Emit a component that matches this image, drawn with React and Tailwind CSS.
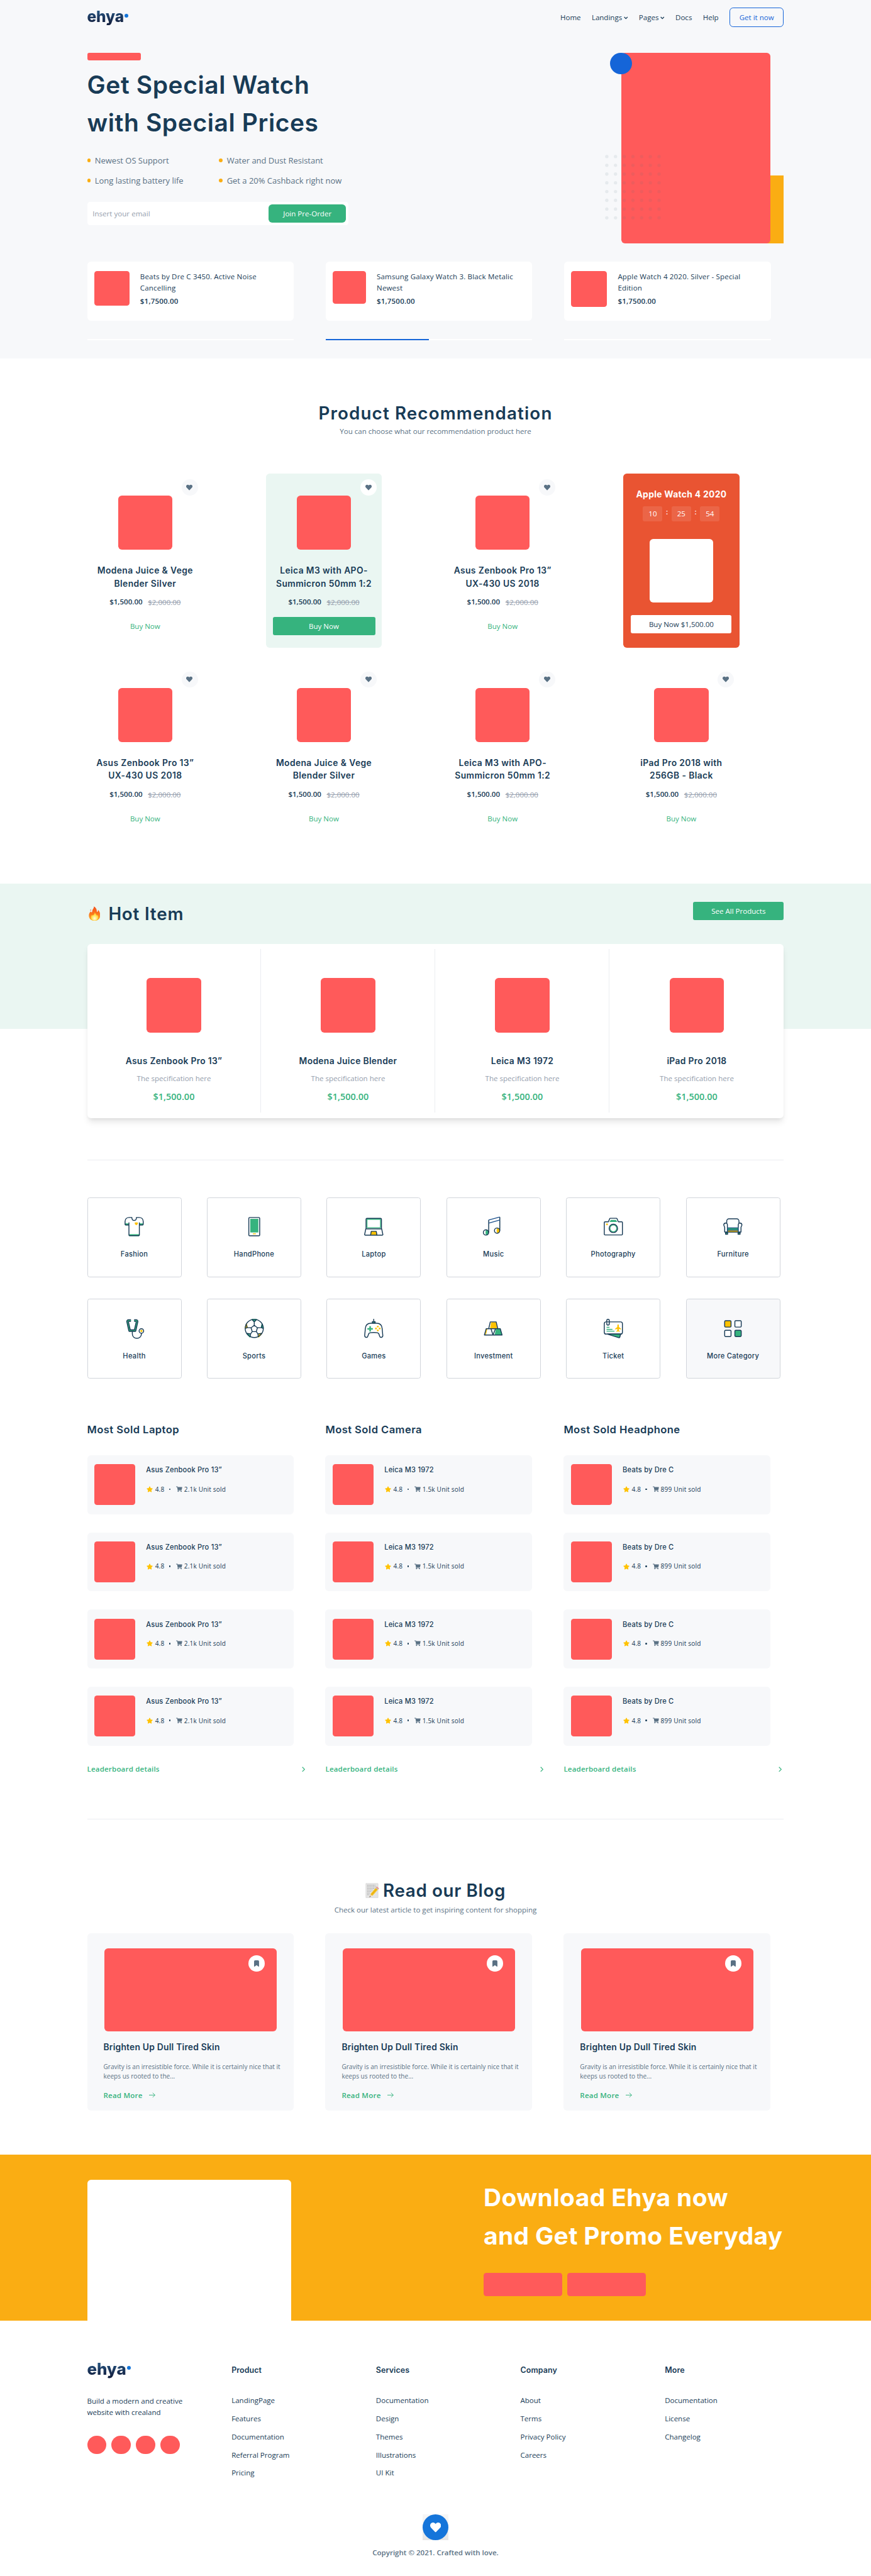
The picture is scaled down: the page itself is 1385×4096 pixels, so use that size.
import React from "react";
import { FaHeart, FaShoppingCart, FaStar } from "react-icons/fa";

const NAVY = "#183b56";
const GREEN = "#36b37e";
const YELLOW = "#ffc200";

function Logo({ large }) {
  return (
    <div className={large ? "flex h-9 items-start" : "flex h-[34px] items-start"}>
      <span
        className={
          "bg-gradient-to-b from-[#24507c] from-20% to-[#13203f] to-90% bg-clip-text font-['Inter'] font-extrabold text-transparent " +
          (large ? "text-[36px] leading-[40px] tracking-[-0.2px]" : "text-[34px] leading-[37px] tracking-[-0.2px]")
        }
      >
        ehya
      </span>
      <span className={large ? "mt-3 ml-0.5 size-[9px] rounded-full bg-[#1475da]" : "mt-[13px] ml-px size-2 rounded-full bg-[#1475da]"} />
    </div>
  );
}

function Caret() {
  return (
    <svg className="ml-1 inline-block align-middle" width="9" height="7" viewBox="0 0 10 7" fill="none" stroke={NAVY} strokeWidth="2">
      <path d="M1 1.2l4 4 4-4" />
    </svg>
  );
}

function Nav() {
  return (
    <nav className="flex h-[76px] items-center justify-between">
      <div className="-mt-1.5">
        <Logo />
      </div>
      <div className="flex items-center gap-6">
        <a>Home</a>
        <a>Landings<Caret /></a>
        <a>Pages<Caret /></a>
        <a>Docs</a>
        <a>Help</a>
        <button className="h-11 w-[120px] rounded-lg border-2 border-[#1565d8] text-[#1565d8]">Get it now</button>
      </div>
    </nav>
  );
}

function Bullet({ children }) {
  return (
    <li className="flex h-7 items-center gap-[9px]">
      <span className="size-2 rounded-full bg-[#faad13]" />
      {children}
    </li>
  );
}

const DOTS = Array.from({ length: 56 }, (_, i) => [(i % 7) * 19.2 + 4, Math.floor(i / 7) * 19.3 + 4]);

function HeroArt() {
  return (
    <div className="relative h-[421px] w-[383px]">
      <div className="absolute right-0 bottom-0 h-[150px] w-[110px] bg-[#faad13]" />
      <div className="absolute top-0 left-6 h-[421px] w-[329px] rounded-lg bg-[#ff5a5a]" />
      <div className="absolute top-0 left-0 size-12 rounded-full bg-[#1565d8]" />
      <svg className="absolute top-[225px] -left-[11px]" width="124" height="144">
        {DOTS.map(([x, y], i) => (
          <circle key={i} cx={x} cy={y} r="3.7" fill="#5a7184" fillOpacity="0.1" />
        ))}
      </svg>
    </div>
  );
}

const HERO_ITEMS = [
  ["Beats by Dre C 3450. Active Noise", "Cancelling", "h-[77px] w-[77px]", false],
  ["Samsung Galaxy Watch 3. Black Metalic", "Newest", "h-[73px] w-[73px]", true],
  ["Apple Watch 4 2020. Silver - Special", "Edition", "h-[79px] w-[79px]", false],
];

function Hero() {
  return (
    <header className="h-[790px] bg-[#f7f8fa]">
      <div className="mx-auto w-[1536px]">
        <Nav />
        <div className="mt-10 flex justify-between">
          <div>
            <div className="h-[17px] w-[118px] rounded-sm bg-[#ff5a5a]" />
            <h1 className="mt-3 font-['Inter'] text-[54px] leading-[84px] font-semibold tracking-[0.85px] whitespace-nowrap">
              Get Special Watch
              <br />
              with Special Prices
            </h1>
            <ul className="mt-[27px] grid grid-cols-[291px_auto] gap-y-4 text-lg text-[#5a7184]">
              <Bullet>Newest OS Support</Bullet>
              <Bullet>Water and Dust Resistant</Bullet>
              <Bullet>Long lasting battery life</Bullet>
              <Bullet>Get a 20% Cashback right now</Bullet>
            </ul>
            <div className="mt-[33px] flex h-[52px] w-[576px] items-center justify-between rounded-md bg-white pr-[5px] pl-3">
              <span className="tracking-[0.05px] text-[#959ead]">Insert your email</span>
              <button className="h-10 w-[171px] rounded-lg bg-[#36b37e] text-white">Join Pre-Order</button>
            </div>
          </div>
          <HeroArt />
        </div>
        <div className="mt-10 flex gap-[69.5px]">
          {HERO_ITEMS.map(([a, b, img, active]) => (
            <div key={a} className="w-[456px] shrink-0">
              <div className="flex h-[130px] rounded-lg bg-white pt-5 pl-4">
                <div className={"shrink-0 rounded-md bg-[#ff5a5a] " + img} />
                <div className="ml-6 pt-px font-medium tracking-[0.23px] whitespace-nowrap">
                  <p className="leading-6">{a}</p>
                  <p className="leading-6">{b}</p>
                  <p className="mt-1.5 leading-6 font-semibold">$1,7500.00</p>
                </div>
              </div>
              <div className="mt-10 flex">
                <div className={"h-[3px] w-[228px] " + (active ? "bg-[#1565d8]" : "bg-white")} />
                <div className="h-[3px] w-[228px] bg-white" />
              </div>
            </div>
          ))}
        </div>
      </div>
    </header>
  );
}

const PRODUCTS = [
  ["Modena Juice & Vege", "Blender Silver"],
  ["Leica M3 with APO-", "Summicron 50mm 1:2", true],
  ["Asus Zenbook Pro 13”", "UX-430 US 2018"],
  null,
  ["Asus Zenbook Pro 13”", "UX-430 US 2018"],
  ["Modena Juice & Vege", "Blender Silver"],
  ["Leica M3 with APO-", "Summicron 50mm 1:2"],
  ["iPad Pro 2018 with", "256GB - Black"],
];

function ProductCard({ a, b, active }) {
  return (
    <div className={"relative flex h-[384px] w-64 flex-col items-center rounded-lg pt-12 " + (active ? "bg-[#eaf6f2]" : "")}>
      <div className={"absolute top-3 right-3 flex size-9 items-center justify-center rounded-full " + (active ? "bg-white" : "bg-[#f7f8fa]")}>
        <FaHeart size={14} color="#5a7184" />
      </div>
      <div className="size-[120px] rounded-lg bg-[#ff5a5a]" />
      <h3 className="mt-8 text-center font-['Inter'] text-[19.2px] leading-7 font-semibold tracking-[0.55px]">
        {a}
        <br />
        {b}
      </h3>
      <div className="mt-3.5 flex h-6 gap-3 leading-6">
        <span className="font-semibold">$1,500.00</span>
        <span className="pt-0.5 text-[#959ead] line-through">$2,000.00</span>
      </div>
      <button className={"mt-[22px] h-10 w-[226px] rounded " + (active ? "bg-[#36b37e] text-white" : "text-[#36b37e]")}>Buy Now</button>
    </div>
  );
}

function TimerBox({ children }) {
  return <span className="flex h-[33px] w-[43px] items-center justify-center rounded bg-white/10">{children}</span>;
}

function DealCard() {
  return (
    <div className="flex h-[384px] w-64 flex-col items-center rounded-lg bg-[#e95432] pt-8 text-white">
      <h3 className="font-['Inter'] text-[19.2px] leading-7 font-bold tracking-[0.43px]">Apple Watch 4 2020</h3>
      <div className="mt-3 flex">
        <TimerBox>10</TimerBox>
        <span className="w-5 text-center font-semibold">:</span>
        <TimerBox>25</TimerBox>
        <span className="w-5 text-center font-semibold">:</span>
        <TimerBox>54</TimerBox>
      </div>
      <div className="mt-[39px] size-[140px] rounded-lg bg-white" />
      <button className="mt-7 h-10 w-[222px] rounded bg-white text-[#183b56]">Buy Now $1,500.00</button>
    </div>
  );
}

function Recommendation() {
  return (
    <section className="mx-auto w-[1536px] pt-[93px]">
      <h2 className="text-center font-['Inter'] text-[38.5px] leading-[56px] font-semibold tracking-[1.55px]">Product Recommendation</h2>
      <p className="text-center text-[#5a7184]">You can choose what our recommendation product here</p>
      <div className="mt-[81px] grid grid-cols-[repeat(4,256px)] gap-x-[138px] gap-y-10">
        {PRODUCTS.map((p, i) => (p ? <ProductCard key={i} a={p[0]} b={p[1]} active={p[2]} /> : <DealCard key={i} />))}
      </div>
    </section>
  );
}

function Fire() {
  return (
    <svg width="26" height="33" viewBox="0 0 26 33">
      <defs>
        <linearGradient id="fire" x1="0" y1="0" x2="0" y2="1">
          <stop offset="0" stopColor="#f4511e" />
          <stop offset="0.55" stopColor="#fb7a1c" />
          <stop offset="1" stopColor="#fdb62b" />
        </linearGradient>
        <radialGradient id="core" cx="0.5" cy="0.75" r="0.7">
          <stop offset="0" stopColor="#fffde0" />
          <stop offset="0.6" stopColor="#ffe14a" />
          <stop offset="1" stopColor="#fdb52a" />
        </radialGradient>
      </defs>
      <path fill="url(#fire)" d="M11.5 0.5c4 2 6.500 6 6.300 9.800 0 2 1 2.700 2 1.500.8-1 .9-2.600.6-4 3.400 3.200 5.400 8 5.100 13C25.100 27.600 20 32 13 32 5.600 32 .6 27.600.5 20.800.4 16.800 2.200 13.500 4.400 11c.3 1.500 1 2.400 2 2.300 1.500-.1 1.400-1.900 1.700-4C8.600 6 12 4.500 11.500.5z" />
      <path fill="#f4511e" d="M4.500 6.500c.9 1.200.8 2.600-.1 3.900-1-.9-1.200-2.500.1-3.900z" />
      <path fill="url(#core)" d="M13.200 13c1 3.200 4 4.500 4.800 8 .4-.6.8-1.400.9-2.300 1.600 1.900 2.400 4.100 2 6.300-.7 4.200-3.800 6.500-7.900 6.500s-7.300-2.300-7.800-6.200c-.3-2.400.6-4.700 2.400-6.500.2 1.100.7 1.700 1.400 1.500C10.800 19.700 13.500 17 13.200 13z" />
    </svg>
  );
}

function Memo() {
  return (
    <svg width="31" height="34" viewBox="0 0 31 34">
      <rect x="1" y="1" width="27" height="32" rx="1" fill="#e4e4e4" stroke="#cfcfcf" strokeWidth="0.700" />
      <path d="M4 5h18M4 8.500h20M4 12h17M4 15.500h12M4 19h9M4 22.500h6M4 26h5" stroke="#9a9a9a" strokeWidth="1.100" strokeDasharray="3 0.900 1.800 0.700" />
      <path d="M9 31.500l2-7 4.700 3.700z" fill="#f2d3a0" />
      <path d="M9 31.500l.8-2.600 1.800 1.400z" fill="#444" />
      <path d="M11 24.500L22.500 11l5 4-11.800 13.200z" fill="#f6c21c" />
      <path d="M13.200 26.300L25 13" stroke="#d99a0b" strokeWidth="1.200" />
      <path d="M22.500 11l1.500-1.600 5 4-1.500 1.600z" fill="#b8c0c4" />
      <path d="M24 9.400c1.500-1.300 6.500 2.300 5 4z" fill="#f08a86" stroke="#f08a86" />
    </svg>
  );
}

const HOT = ["Asus Zenbook Pro 13”", "Modena Juice Blender", "Leica M3 1972", "iPad Pro 2018"];

function HotItems() {
  return (
    <section className="mt-[96.5px] h-80 bg-[#eaf6f2]">
      <div className="mx-auto w-[1536px]">
        <div className="flex h-[132px] items-start justify-between pt-10">
          <div className="flex items-center gap-[18px] pt-px pl-[3px]">
            <Fire />
            <h2 className="font-['Inter'] text-[38.5px] leading-[50px] font-semibold tracking-[1.1px]">Hot Item</h2>
          </div>
          <button className="h-10 w-[200px] rounded bg-[#36b37e] text-white">See All Products</button>
        </div>
        <div className="grid h-[384px] grid-cols-4 rounded-lg bg-white py-3 shadow-[0_10px_15px_-3px_rgba(0,0,0,0.1),0_4px_6px_-2px_rgba(0,0,0,0.05)]">
          {HOT.map((name, i) => (
            <div key={name} className={"flex flex-col items-center pt-16 " + (i < 3 ? "border-r-2 border-[#ebedf1]" : "")}>
              <div className="size-[120px] rounded-lg bg-[#ff5a5a]" />
              <h3 className="mt-[49px] font-['Inter'] text-[19.2px] leading-7 font-semibold tracking-[0.45px]">{name}</h3>
              <p className="mt-[11px] leading-6 text-[#959ead]">The specification here</p>
              <p className="mt-4 text-xl leading-7 font-semibold tracking-[0.05px] text-[#36b37e]">$1,500.00</p>
            </div>
          ))}
        </div>
      </div>
    </section>
  );
}

const ICONS = {
  Fashion: (
    <>
      <path d="M4 17h8v4H4zM36 17h8v4h-8zM13 41h22v4H13z" fill={GREEN} stroke="none" />
      <path d="M25.500 15h6.500v3.500l-3.200 2.500-3.300-2.500z" fill={YELLOW} stroke="none" />
      <path d="M12.500 15v27.500a1.500 1.500 0 0 0 1.500 1.500h20a1.500 1.500 0 0 0 1.500-1.500V15M12.500 20.500H5.500A1.500 1.500 0 0 1 4 19v-6c0-5.500 4-9 9-9h6c0 4 2 6.500 5 6.500S29 8 29 4h6c5 0 9 3.500 9 9v6a1.500 1.500 0 0 1-1.500 1.500h-7" />
    </>
  ),
  HandPhone: (
    <>
      <rect x="15.200" y="7" width="17.800" height="30" fill={GREEN} stroke="none" />
      <path d="M21 40h6.500" stroke={YELLOW} />
      <rect x="12" y="4" width="24" height="40.500" rx="2" />
    </>
  ),
  Laptop: (
    <>
      <rect x="9" y="8" width="30" height="18.500" stroke={GREEN} />
      <path d="M18 34.500h12l1.500 8h-15z" fill={YELLOW} stroke="none" />
      <path d="M17 43l1.500-8.500h11L31 43" />
      <path d="M7 29V8a2 2 0 0 1 2-2h30a2 2 0 0 1 2 2v21M6.500 29h35L44 41a1.500 1.500 0 0 1-1.500 2h-37A1.500 1.500 0 0 1 4 41z" />
    </>
  ),
  Music: (
    <>
      <path d="M8.500 31.500a5.500 5.500 0 0 1 0 11c-2-2-2-9 0-11z" fill={GREEN} stroke="none" />
      <path d="M33 27.500a5.500 5.500 0 0 1 0 11c-2-2-2-9 0-11z" fill={YELLOW} stroke="none" />
      <circle cx="8" cy="37" r="5.800" />
      <circle cx="32.500" cy="33" r="5.800" />
      <path d="M14 37V9.500M38.500 33V3" />
      <path d="M14 9.500L38.500 3M14 16.500L38.500 9.500" stroke="#1a4f8b" />
    </>
  ),
  Photography: (
    <>
      <path d="M18.500 9.500h11l3 4.500h-17z" fill={GREEN} stroke="none" />
      <circle cx="24" cy="28" r="7.500" stroke={GREEN} />
      <circle cx="24" cy="28" r="9.300" />
      <circle cx="10" cy="19" r="2.100" fill={YELLOW} stroke="none" />
      <path d="M5.500 13.500H13L16 6.500a1.500 1.500 0 0 1 1.200-.8h13.600a1.500 1.500 0 0 1 1.200.8l3 7h7.500A1.500 1.500 0 0 1 44 15v26a1.500 1.500 0 0 1-1.500 1.500h-37A1.500 1.500 0 0 1 4 41V15a1.500 1.500 0 0 1 1.500-1.500z" />
    </>
  ),
  Furniture: (
    <>
      <rect x="12" y="27.500" width="24" height="4.500" fill={GREEN} stroke="none" />
      <rect x="12" y="32.500" width="24" height="4" fill={YELLOW} stroke="none" />
      <path d="M8 37h4.500v4H8zM35.500 37H40v4h-4.500z" fill={GREEN} />
      <path d="M10.500 17v-5a5 5 0 0 1 5-5h17a5 5 0 0 1 5 5v5M12 27V20c0-5.500-8-4.500-8 .5 0 2 2 3.500 2 5.500v10h36V26c0-2 2-3.500 2-5.500 0-5-8-6-8-.5v7" />
      <path d="M12 27h24M12 32h24M12 27v9.500M36 27v9.500" stroke="#1a4f7b" />
    </>
  ),
  Health: (
    <>
      <path d="M17 6.500h-5.500a2 2 0 0 0-2 2.300l4.500 20h12l4.500-20a2 2 0 0 0-2-2.300H24" stroke={NAVY} strokeWidth="5.500" />
      <path d="M17 6.500h-5.500a2 2 0 0 0-2 2.300l4.500 20h12l4.500-20a2 2 0 0 0-2-2.300H24" stroke={GREEN} strokeWidth="1.600" />
      <path d="M20 31v5c0 13 20 13 20 0v-1.500" />
      <circle cx="40" cy="29.500" r="5" fill="#fff" />
      <circle cx="40" cy="29.500" r="2.500" fill={YELLOW} stroke="none" />
    </>
  ),
  Sports: (
    <>
      <path d="M19 4h10l-5 5.500zM41 14l3 9-4.500-1zM7.500 35l5 1 2 7z" fill={GREEN} stroke={GREEN} />
      <path d="M7 14l-3 9 4.500-1zM40.500 35l-5 1-2 7z" fill={YELLOW} stroke={YELLOW} />
      <circle cx="24" cy="24" r="20" />
      <path d="M24 9.500v7.500M24 17l7 5.500-2.500 8.500h-9L17 22.500zM19 4.500l5 5 5-5M31 22.500l8.500-.5L42 14M17 22.500L8.500 22 6 14M39.500 22l4 2M8.500 22l-4 2M19.500 31L16 36l-8-1M28.500 31l3.500 5 8-1M16 36l-1 7M32 36l1 7" />
    </>
  ),
  Games: (
    <>
      <path d="M24 3v5" />
      <path d="M21 12V9h6v3z" fill={GREEN} />
      <path d="M10 25h12M16 19v12" stroke={GREEN} strokeWidth="3.500" />
      <g fill={YELLOW} stroke="none">
        <circle cx="33" cy="20" r="2" />
        <circle cx="33" cy="28.500" r="2" />
        <circle cx="28.900" cy="24.200" r="2" />
        <circle cx="37.200" cy="24.200" r="2" />
      </g>
      <path d="M18 12.500h12c7.500 0 12 4 12.500 11.500L44 40c0 4.500-6 5-7 1l-2-5.500c-1-2-5-2.500-11-2.500s-10 .5-11 2.500L11 41c-1 4-7 3.500-7-1l1.500-16C6 16.500 10.500 12.500 18 12.500z" />
    </>
  ),
  Investment: (
    <>
      <path d="M19.500 10H30l3 14H17zM6 38l2.500-13.500H11L8 38z" fill={YELLOW} stroke="none" />
      <path d="M30 25h10l3 13H27z" fill={GREEN} stroke="none" />
      <path d="M17.500 9.500h13l3.500 15H14zM8.500 24.500h10.500l4.500 14H4.500zM29 24.500h10.500l4 14H23.500z" />
    </>
  ),
  Ticket: (
    <>
      <path d="M11 36.500l25.500 8c1 0 1.500-.5 1.700-1.200l2-7z" fill={GREEN} />
      <rect x="4" y="9.500" width="40" height="27" rx="4" />
      <path d="M9.500 12V6.500a2.700 2.700 0 0 1 5.500 0V14a2.700 2.700 0 0 1-5.500 0v-1.500" />
      <path d="M9 21.500h6.500M9 26h13M9 30h17.500" stroke={GREEN} />
      <path d="M34.500 15c1.200 0 1.700 1.500 1.700 3v2.800l4.800 3.700v1.700l-4.800-1.400v3.400l2 1.800V31.500l-3.700-.9-3.700.9V30l2-1.800v-3.400L28 26.200v-1.700l4.800-3.700V18c0-1.500.5-3 1.700-3z" fill={YELLOW} stroke="none" />
    </>
  ),
  "More Category": (
    <>
      <rect x="6" y="7" width="14" height="14" rx="2" fill={YELLOW} />
      <rect x="28.500" y="7" width="14" height="14" rx="2" fill="#fff" />
      <rect x="6" y="28" width="14" height="14" rx="2" fill="#fff" />
      <rect x="28.500" y="28" width="14" height="14" rx="2" fill={GREEN} />
    </>
  ),
};

const CATEGORIES = ["Fashion", "HandPhone", "Laptop", "Music", "Photography", "Furniture", "Health", "Sports", "Games", "Investment", "Ticket", "More Category"];

function Categories() {
  return (
    <section className="mx-auto mt-[288.5px] w-[1536px] border-t-2 border-[#ebedf1] pt-[80.6px]">
      <div className="grid grid-cols-[repeat(6,208px)] gap-x-14 gap-y-12">
        {CATEGORIES.map((name) => (
          <div
            key={name}
            className={"flex h-44 flex-col items-center rounded-[5px] border border-[#d1d5db] pt-10 " + (name === "More Category" ? "bg-[#f7f8fa]" : "bg-white")}
          >
            <svg width="48" height="48" viewBox="0 0 48 48" fill="none" stroke={NAVY} strokeWidth="2" strokeLinejoin="round">
              {ICONS[name]}
            </svg>
            <span className="mt-[25px] font-['Inter'] text-[15.4px] leading-6 font-medium tracking-[0.4px]">{name}</span>
          </div>
        ))}
      </div>
    </section>
  );
}

const SOLD = [
  ["Most Sold Laptop", "Asus Zenbook Pro 13”", "2.1k Unit sold"],
  ["Most Sold Camera", "Leica M3 1972", "1.5k Unit sold"],
  ["Most Sold Headphone", "Beats by Dre C", "899 Unit sold"],
];

function MostSold() {
  return (
    <section className="mx-auto mt-[95px] grid w-[1536px] grid-cols-3 gap-x-10">
      {SOLD.map(([title, name, units]) => (
        <div key={title}>
          <h2 className="font-['Inter'] text-[23px] leading-9 font-semibold tracking-[0.6px]">{title}</h2>
          <div className="mt-[38px] flex flex-col gap-10">
            {[0, 1, 2, 3].map((i) => (
              <div key={i} className="flex h-[130px] w-[456px] rounded-lg bg-[#f7f8fa] pt-5 pl-4">
                <div className="size-[90px] rounded-md bg-[#ff5a5a]" />
                <div className="ml-6">
                  <h3 className="font-['Inter'] text-[15.4px] leading-[26px] font-medium tracking-[0.28px]">{name}</h3>
                  <div className="mt-[19px] flex h-5 items-center text-sm leading-5 tracking-[0.25px]">
                    <FaStar size={14} color={YELLOW} className="ml-px" />
                    <span className="ml-[5px]">4.8</span>
                    <span className="ml-[10px] size-1 rounded-full bg-[#183b56]" />
                    <FaShoppingCart size={13.5} color="#5a7184" className="ml-3" />
                    <span className="ml-1 font-medium">{units}</span>
                  </div>
                </div>
              </div>
            ))}
          </div>
          <div className="mt-10 flex items-center justify-between pr-[5px]">
            <a className="font-semibold tracking-[0.26px] text-[#36b37e]">Leaderboard details</a>
            <svg width="7" height="12" viewBox="0 0 7 12" fill="none" stroke={GREEN} strokeWidth="1.700">
              <path d="M1 1l5 5-5 5" />
            </svg>
          </div>
        </div>
      ))}
    </section>
  );
}

function Blog() {
  return (
    <section className="mx-auto mt-[97px] w-[1536px] border-t-2 border-[#ebedf1] pt-[129px]">
      <div className="flex h-14 items-center justify-center gap-2">
        <Memo />
        <h2 className="font-['Inter'] text-[38.5px] leading-[56px] font-semibold tracking-[0.9px]">Read our Blog</h2>
      </div>
      <p className="mt-[3px] text-center text-[#5a7184]">Check our latest article to get inspiring content for shopping</p>
      <div className="mt-10 grid grid-cols-3 gap-x-10">
        {[0, 1, 2].map((i) => (
          <article key={i} className="h-[391px] w-[456px] rounded-lg bg-[#f7f8fa] px-9 pt-8">
            <div className="ml-0.5 flex h-[183px] w-[380px] justify-end rounded-lg bg-[#ff5a5a] pt-4 pr-[26px]">
              <span className="flex size-9 items-center justify-center rounded-full bg-white">
                <svg width="11" height="14" viewBox="0 0 11 14" fill="#5a7184">
                  <path d="M2.500 0h6A2.500 2.500 0 0 1 11 2.500V13.200c0 .6-.7 1-1.200.6L5.500 10.800 1.200 13.800C.7 14.200 0 13.800 0 13.200V2.500A2.500 2.500 0 0 1 2.500 0z" />
                </svg>
              </span>
            </div>
            <h3 className="mt-[21px] font-['Inter'] text-[19.2px] leading-7 font-semibold tracking-[0.32px]">Brighten Up Dull Tired Skin</h3>
            <p className="mt-5 text-sm leading-5 whitespace-nowrap text-[#5a7184]">
              Gravity is an irresistible force. While it is certainly nice that it
              <br />
              keeps us rooted to the...
            </p>
            <a className="mt-5 flex items-center gap-[14px] font-semibold tracking-[0.3px] text-[#36b37e]">
              Read More
              <svg width="14" height="12" viewBox="0 0 14 12" fill="none" stroke={GREEN} strokeWidth="1.300">
                <path d="M0 6h13M8 1l5 5-5 5" />
              </svg>
            </a>
          </article>
        ))}
      </div>
    </section>
  );
}

function Download() {
  return (
    <section className="mt-24 h-[366px] bg-[#faad13]">
      <div className="mx-auto flex w-[1536px] justify-between">
        <div className="mt-14 h-[310px] w-[450px] rounded-t-lg bg-white" />
        <div className="mt-[53px] w-[662px]">
          <h2 className="font-['Inter'] text-[54px] leading-[84px] font-bold tracking-[0.5px] whitespace-nowrap text-white">
            Download Ehya now
            <br />
            and Get Promo Everyday
          </h2>
          <div className="mt-10 flex gap-3">
            <div className="h-[51px] w-[173px] rounded-md bg-[#ff5a5a]" />
            <div className="h-[51px] w-[173px] rounded-md bg-[#ff5a5a]" />
          </div>
        </div>
      </div>
    </section>
  );
}

const LINKS = [
  ["Product", ["LandingPage", "Features", "Documentation", "Referral Program", "Pricing"]],
  ["Services", ["Documentation", "Design", "Themes", "Illustrations", "UI Kit"]],
  ["Company", ["About", "Terms", "Privacy Policy", "Careers"]],
  ["More", ["Documentation", "License", "Changelog"]],
];

function Footer() {
  return (
    <footer className="mx-auto h-[564px] w-[1536px]">
      <div className="grid h-[428px] grid-cols-5 gap-x-14 pt-24">
        <div>
          <div className="-mt-2">
            <Logo large />
          </div>
          <p className="mt-[42px] leading-6 whitespace-nowrap">
            Build a modern and creative
            <br />
            website with crealand
          </p>
          <div className="mt-10 flex gap-3">
            {[0, 1, 2, 3].map((i) => (
              <span key={i} className="h-10 w-[42px] rounded-[20px] bg-[#ff5a5a]" />
            ))}
          </div>
        </div>
        {LINKS.map(([title, items]) => (
          <div key={title}>
            <h4 className="font-['Inter'] text-[17.3px] leading-7 font-semibold tracking-[0.1px]">{title}</h4>
            <ul className="mt-10 flex flex-col gap-4">
              {items.map((l) => (
                <li key={l} className="leading-6">{l}</li>
              ))}
            </ul>
          </div>
        ))}
      </div>
      <div className="mx-auto size-14 bg-gradient-to-b from-[#f7f7f7] to-[#e6e6e6]">
        <div className="flex size-14 items-center justify-center rounded-full bg-[#1575da]">
          <FaHeart size={24} color="#fff" />
        </div>
      </div>
      <p className="mt-4 text-center leading-6 font-semibold text-[#5a7184]">Copyright © 2021. Crafted with love.</p>
    </footer>
  );
}

export default function App() {
  return (
    <div className="w-[1920px] overflow-hidden bg-white font-['Open_Sans',sans-serif] text-base text-[#183b56] [zoom:0.72135]">
      <Hero />
      <Recommendation />
      <HotItems />
      <Categories />
      <MostSold />
      <Blog />
      <Download />
      <Footer />
    </div>
  );
}
